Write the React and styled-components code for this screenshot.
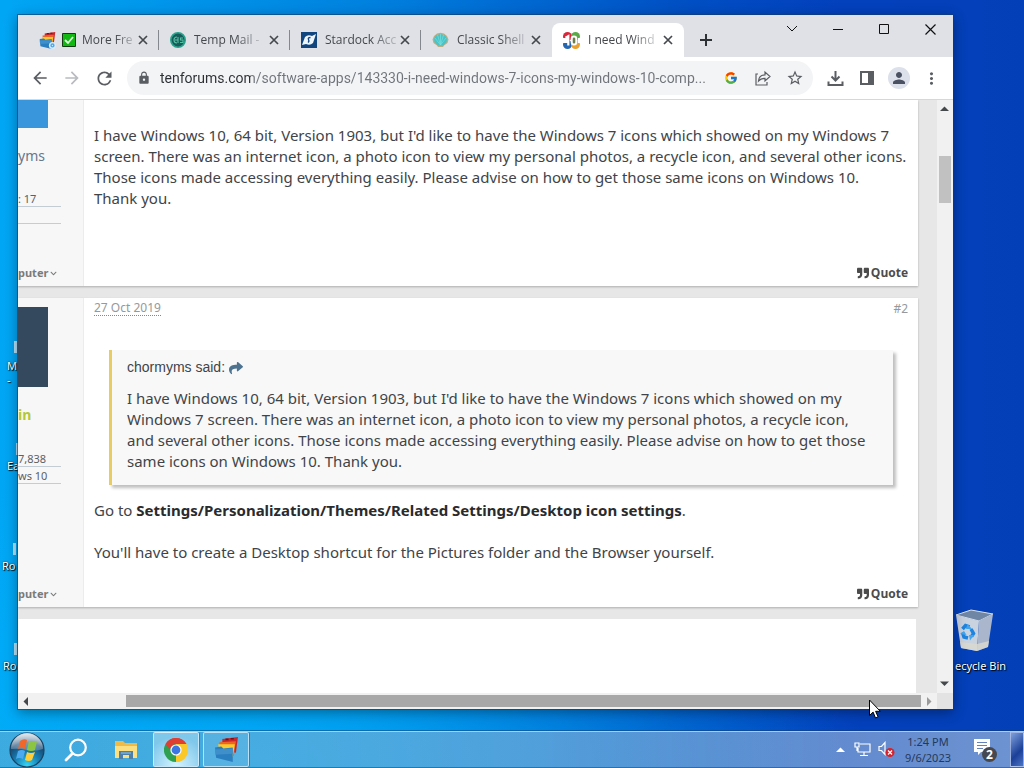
import React from "react";
import styled, { createGlobalStyle } from "styled-components";
import {
  MdArrowBack,
  MdArrowForward,
  MdRefresh,
  MdLock,
  MdStarBorder,
  MdPerson,
  MdMoreVert,
} from "react-icons/md";
import { FcGoogle } from "react-icons/fc";
import { FaQuoteRight, FaShare, FaChevronDown } from "react-icons/fa";

const GlobalStyle = createGlobalStyle`
  * { box-sizing: border-box; }
  body {
    margin: 0;
    font-family: "Noto Sans", "Open Sans", sans-serif;
    overflow: hidden;
  }
  button {
    border: 0;
    padding: 0;
    background: none;
    color: inherit;
    font: inherit;
    display: flex;
    align-items: center;
    justify-content: center;
    flex: none;
  }
  svg { display: block; flex: none; }
  a { color: inherit; text-decoration: none; }
`;

/* ---------- desktop ---------- */

const Desktop = styled.div`
  position: relative;
  display: flex;
  flex-direction: column;
  justify-content: flex-end;
  height: 100vh;
  overflow: hidden;
  background:
    radial-gradient(ellipse 60% 40% at 25% 100%, rgba(0, 178, 250, 0.75), rgba(0, 178, 250, 0) 100%),
    linear-gradient(90deg, #00a6f4 0%, #0083e0 35%, #0050c4 66%, #0340bc 82%, #0340b8 100%);
`;

const DesktopItem = styled.div`
  position: absolute;
  left: ${(p) => p.$x}px;
  top: ${(p) => p.$y}px;
  display: flex;
  flex-direction: column;
  align-items: flex-start;
  gap: ${(p) => p.$gap || 4}px;
  font-size: 11px;
  line-height: 14px;
  color: #fff;
  white-space: pre-line;
  text-shadow: 1px 1px 1px #000, 0 0 2px rgba(0, 0, 0, 0.7);
`;

const Sliver = styled.span`
  width: 3px;
  height: 12px;
  align-self: flex-end;
  background: rgba(225, 240, 250, 0.8);
`;

const Pointer = styled.svg`
  position: absolute;
  left: 868px;
  top: 699px;
`;

/* ---------- browser window ---------- */

const Window = styled.main`
  position: absolute;
  top: 15px;
  right: 71px;
  bottom: 59px;
  left: 18px;
  display: flex;
  flex-direction: column;
  background: #fff;
  box-shadow: 0 0 0 1px rgba(20, 60, 110, 0.6), 0 3px 12px rgba(0, 0, 0, 0.4);
`;

const TabStrip = styled.header`
  display: flex;
  justify-content: space-between;
  height: 42px;
  flex: none;
  padding-left: 10px;
  background: #dfe1e7;
`;

const Tabs = styled.div`
  display: flex;
  align-items: flex-end;
`;

const Tab = styled.div`
  position: relative;
  display: flex;
  align-items: center;
  width: ${(p) => (p.$active ? 132 : 131)}px;
  height: 34px;
  padding: 0 8px 0 11px;
  border-radius: 8px 8px 0 0;
  color: #45484d;
  background: ${(p) => (p.$active ? "#fff" : "transparent")};
  &::after {
    content: "";
    position: absolute;
    right: 0;
    top: 7px;
    width: 1px;
    height: 20px;
    background: ${(p) => (p.$divider ? "#84878d" : "transparent")};
  }
`;

const TabTitle = styled.button`
  flex: 1;
  min-width: 0;
  justify-content: flex-start;
  gap: ${(p) => (p.$tight ? 6 : 8)}px;
  font-family: "Open Sans", "Noto Sans", sans-serif;
  font-size: 12px;
  line-height: 18px;
  white-space: nowrap;
`;

const Fade = styled.span`
  text-align: left;
  mask-image: linear-gradient(90deg, #000 65%, rgba(0, 0, 0, 0.25) 100%);
`;

const TabClose = styled.button`
  width: 16px;
  height: 16px;
`;

const NewTab = styled.button`
  width: 28px;
  height: 34px;
  margin-left: 8px;
  color: #2e3136;
`;

const Captions = styled.div`
  display: flex;
  align-items: flex-start;
`;

const Caption = styled.button`
  width: 46px;
  height: 28px;
  color: #111;
`;

const Toolbar = styled.nav`
  display: flex;
  align-items: center;
  height: 43px;
  flex: none;
  padding-left: 6px;
  padding-right: 6px;
  border-bottom: 1px solid #d5d7da;
  color: #5a5d62;
`;

const ToolButton = styled.button`
  width: 32px;
  height: 32px;
  color: ${(p) => (p.$dim ? "#b9bbbe" : "inherit")};
`;

const Omnibox = styled.div`
  display: flex;
  align-items: center;
  flex: 1;
  min-width: 0;
  height: 34px;
  margin: 0 6px 0 7px;
  padding-left: 10px;
  padding-right: 2px;
  border-radius: 17px;
  background: #f3f4f6;
`;

const Address = styled.input`
  flex: 1;
  min-width: 0;
  margin-left: 9px;
  padding: 0;
  border: 0;
  outline: 0;
  font-family: Roboto, "Open Sans", sans-serif;
  font-size: 14px;
  line-height: 20px;
  color: transparent;
  background: linear-gradient(90deg, #2c2f33 91px, #70747a 91px);
  background-clip: text;
`;

const Avatar = styled.span`
  display: flex;
  align-items: center;
  justify-content: center;
  width: 22px;
  height: 22px;
  border-radius: 50%;
  background: #dce0ea;
  color: #4a5163;
`;

/* ---------- page view with its scroll bars ---------- */

const View = styled.div`
  flex: 1;
  min-height: 0;
  display: grid;
  grid-template-columns: 1fr 16px;
  grid-template-rows: 1fr 16px;
  background: #f1f1f1;
`;

const Page = styled.div`
  min-height: 0;
  overflow: hidden;
  display: flex;
  flex-direction: column;
  gap: 12px;
  padding-right: 19px;
  background: #e7e7e7;
`;

const Bar = styled.div`
  display: flex;
  flex-direction: ${(p) => (p.$vertical ? "column" : "row")};
  align-items: center;
  padding: ${(p) => (p.$vertical ? "6px 1px 6px 0" : "0 5px")};
  background: #f1f1f1;
  color: #45484b;
`;

const Thumb = styled.span`
  background: ${(p) => (p.$vertical ? "#c1c1c1" : "#a8a8a8")};
  width: ${(p) => (p.$vertical ? "12px" : "auto")};
  height: ${(p) => (p.$vertical ? "47px" : "12px")};
  flex: ${(p) => (p.$vertical ? "none" : 1)};
  margin: ${(p) => (p.$vertical ? "44px 0 auto 1px" : "0 5px 0 97px")};
`;

const Corner = styled.div`
  background: #e3e3e3;
`;

/* ---------- forum ---------- */

const Post = styled.article`
  display: flex;
  flex: none;
  background: #fff;
  box-shadow: 0 1px 2px rgba(0, 0, 0, 0.25);
  color: #404448;
`;

const NextPost = styled.article`
  flex: 1;
  margin-right: 2px;
  background: #fff;
`;

const Member = styled.aside`
  display: flex;
  flex-direction: column;
  width: 66px;
  flex: none;
  background: #f7f7f7;
  border-right: 1px solid #ececec;
`;

const Picture = styled.div`
  width: 30px;
  height: ${(p) => p.$height}px;
  margin-top: ${(p) => p.$top}px;
  background: ${(p) => p.$color};
`;

const Name = styled.a`
  margin-top: 18px;
  font-size: 14px;
  line-height: 20px;
  color: ${(p) => (p.$staff ? "#b5c832" : "#66788c")};
  font-weight: ${(p) => (p.$staff ? 700 : 400)};
`;

const Stats = styled.div`
  width: 43px;
  margin-top: ${(p) => p.$top}px;
  font-size: 11px;
  line-height: 18px;
  color: #5c6066;
`;

const Stat = styled.div`
  height: 17px;
  border-bottom: 1px solid #c4ccd4;
`;

const Computer = styled.button`
  justify-content: flex-start;
  gap: 2px;
  margin-top: auto;
  margin-bottom: 4px;
  font-size: 11px;
  line-height: 18px;
  font-weight: 700;
  color: #7b7b7b;
`;

const Content = styled.div`
  display: flex;
  flex-direction: column;
  flex: 1;
  min-width: 0;
  padding: ${(p) => p.$top}px 10px 4px;
`;

const PostHead = styled.div`
  display: flex;
  justify-content: space-between;
  align-items: flex-start;
  font-size: 12px;
  line-height: 16px;
  color: #96999c;
`;

const PostDate = styled.time`
  border-bottom: 1px dotted #85888b;
  line-height: 14px;
`;

const Text = styled.p`
  margin: 0;
  font-size: 15px;
  line-height: 21px;
  b { color: #292b2e; }
`;

const Quoted = styled.blockquote`
  margin: 33px 15px 15px;
  padding: 7px 15px 13px;
  border-left: 3px solid #e8cc62;
  background: #f8f8f8;
  box-shadow: 3px 3px 3px rgba(0, 0, 0, 0.25);
`;

const Said = styled.div`
  display: flex;
  align-items: center;
  gap: 4px;
  margin-bottom: 10px;
  font-family: "Liberation Sans", Arial, sans-serif;
  font-size: 14px;
  line-height: 21px;
  svg { color: #4d7391; }
`;

const QuoteButton = styled.button`
  align-self: flex-end;
  gap: 2px;
  margin-top: ${(p) => p.$top}px;
  font-family: "Open Sans", "Noto Sans", sans-serif;
  font-size: 12px;
  line-height: 18px;
  font-weight: 700;
  color: #4c4c4c;
`;

/* ---------- taskbar ---------- */

const Taskbar = styled.footer`
  display: flex;
  align-items: stretch;
  height: 37px;
  flex: none;
  padding-left: 1px;
  border-top: 1px solid rgba(190, 225, 245, 0.75);
  border-bottom: 1px solid rgba(40, 60, 90, 0.5);
  box-shadow: 0 -1px 0 rgba(20, 60, 110, 0.5);
  background: linear-gradient(90deg, rgba(120, 170, 200, 0.5), rgba(160, 185, 215, 0.52) 60%, rgba(175, 198, 225, 0.62));
`;

const TaskButton = styled.button`
  width: ${(p) => p.$width}px;
  ${(p) =>
    p.$open &&
    `border: 1px solid rgba(230, 245, 255, 0.7);
     border-radius: 2px;
     box-shadow: 1px 0 0 rgba(30, 80, 120, 0.5);`}
  margin-right: ${(p) => (p.$open ? 4 : 0)}px;
  background: ${(p) =>
    p.$active
      ? "radial-gradient(circle at 50% 100%, #d5f3ff, rgba(160, 215, 240, 0.65) 75%)"
      : p.$open
      ? "rgba(150, 205, 230, 0.2)"
      : "none"};
`;

const Tray = styled.div`
  display: flex;
  align-items: center;
  margin-left: auto;
  color: #fff;
`;

const TrayButton = styled.button`
  width: ${(p) => p.$width || 24}px;
`;

const Clock = styled.time`
  width: 60px;
  margin-right: 2px;
  text-align: center;
  font-size: 11px;
  line-height: 16px;
  color: #25395c;
`;

const Peek = styled.button`
  align-self: stretch;
  width: 14px;
  border: 1px solid rgba(210, 225, 250, 0.65);
  background: linear-gradient(135deg, #7e9fdc, #1c3f98 60%, #4b74c4);
`;

/* ---------- drawings ---------- */

const Cross = () => (
  <svg width="10" height="10" viewBox="0 0 10 10" stroke="#45484d" strokeWidth="1.7">
    <path d="M1 1l8 8M9 1l-8 8" />
  </svg>
);

const FolderStack = ({ size = 18, badge }) => (
  <svg width={size} height={size} viewBox="0 0 24 24">
    <path d="M8 2l15-2-2 15-13-2z" fill="#c8262b" />
    <path d="M11 1.500h3v1.500h-3zM16 1h3v1.500h-3z" fill="#701316" />
    <path d="M5 5l16-1-2 14-13-2z" fill="#ee6423" />
    <path d="M4 7h16l-2 12-12-2z" fill="#fbc92e" />
    <path d="M1 10l6-1 2 2 9-1v14L2 20z" fill="#2a7fc0" />
    <path d="M1 12l17-1v5L1.500 17z" fill="#3f8fcb" />
    {badge && <circle cx="19" cy="19" r="5" fill="#d9ecf8" />}
    {badge && <circle cx="19" cy="19" r="2" fill="none" stroke="#55a5de" strokeWidth="2" />}
  </svg>
);

const TempMail = () => (
  <svg width="16" height="16" viewBox="0 0 16 16">
    <circle cx="8" cy="8" r="7.2" fill="#175c5b" stroke="#27a38c" strokeWidth="1.6" />
    <path d="M7 5a3 3 0 100 6M5 8h3M8 5v6M13 6h-2.5v2H13v2.5h-3" fill="none" stroke="#57c1a4" strokeWidth="1.1" />
  </svg>
);

const Stardock = () => (
  <svg width="16" height="16" viewBox="0 0 16 16">
    <path d="M0 0h16v16H0z" fill="#11457f" />
    <path d="M1 13L4 5q3-3 7-1l4-2-3 9q-3 3-7 1z" fill="#eef5fb" />
    <path d="M9.500 5.500Q6.500 5.500 7.500 7.500T7 10.500" fill="none" stroke="#11457f" strokeWidth="1.3" />
  </svg>
);

const Shell = () => (
  <svg width="17" height="16" viewBox="0 0 17 16">
    <path d="M5 13.500L1.500 11 .5 7.500 2 4l3-2.500L8.500.8 12 1.500 15 4l1.500 3.500-1 3.500-3.500 2.500-1 1.500H6z" fill="#b9ae85" />
    <path d="M6 13.500L2.500 10 2 7l2-3.500L8.500 2 13 3.500 15 7l-.5 3-3.500 3.500z" fill="#42c5cb" />
    <path d="M8.500 13L5.500 3M8.500 13V2M8.500 13l3-10M8.500 13L3 6M8.500 13L14 6" stroke="#78dedd" strokeWidth=".7" />
  </svg>
);

const TenForums = () => (
  <svg width="17" height="17" viewBox="0 0 17 17">
    <circle cx="4.500" cy="4.500" r="4.500" fill="#d9273b" />
    <circle cx="12.500" cy="4.500" r="4.500" fill="#59a947" />
    <circle cx="4.500" cy="12.500" r="4.500" fill="#2667b2" />
    <circle cx="12.500" cy="12.500" r="4.500" fill="#e9a22c" />
    <path d="M0 6h5v5H0zM15 6h2v5h-2z" fill="#fff" />
    <path d="M2.500 5.800l2.800-1.600V13.500" fill="none" stroke="#fff" strokeWidth="2.200" />
    <rect x="8.700" y="4.500" width="4.600" height="8" rx="2.300" fill="#6b7d48" stroke="#fff" strokeWidth="2" />
  </svg>
);

const CheckMark = () => (
  <svg width="14" height="14" viewBox="0 0 14 14">
    <path d="M.5.5h13v13H.5z" fill="#12b812" stroke="#143c14" />
    <path d="M3 7l3 3 5-6" fill="none" stroke="#d9ffd5" strokeWidth="1.800" />
  </svg>
);

const StartOrb = () => (
  <svg width="36" height="36" viewBox="0 0 36 36">
    <defs>
      <radialGradient id="orb" cx=".5" cy=".95" r=".9">
        <stop offset="0" stopColor="#35d5f5" />
        <stop offset=".4" stopColor="#1681b5" />
        <stop offset=".75" stopColor="#164873" />
        <stop offset="1" stopColor="#7f99b0" />
      </radialGradient>
      <linearGradient id="gloss" x1="0" y1="0" x2="0" y2="1">
        <stop offset="0" stopColor="#fff" stopOpacity=".75" />
        <stop offset="1" stopColor="#fff" stopOpacity=".2" />
      </linearGradient>
    </defs>
    <circle cx="18" cy="18" r="17" fill="url(#orb)" stroke="#1c4261" strokeWidth="1.2" />
    <path d="M2 17a16 16 0 0132 0q-8 3-16 1T2 17z" fill="url(#gloss)" />
    <path d="M11 9q4-3 7-1l-2 9q-4-2-7 0z" fill="#f0662b" />
    <path d="M20 9q4 2 8 0l-2 9q-4 2-8 0z" fill="#8cc542" />
    <path d="M9 19q4-2 7 0l-2 8q-4-2-7 0z" fill="#4eaaf0" />
    <path d="M18 20q4 2 8 0l-3 8q-3 2-7 0z" fill="#ffcd38" />
  </svg>
);

const SearchGlass = () => (
  <svg width="24" height="24" viewBox="0 0 24 24" fill="none" stroke="#fff" strokeLinecap="round">
    <circle cx="14" cy="9.500" r="7.800" strokeWidth="2.200" />
    <path d="M8.500 15.500L2 22" strokeWidth="2.800" />
  </svg>
);

const Explorer = () => (
  <svg width="24" height="24" viewBox="0 0 24 24">
    <path d="M1 3h8l2 2h12v15H1z" fill="#f0ba46" />
    <path d="M1 8h22v12H1z" fill="#fbdf80" />
    <path d="M5 13h14v8h-4v-4H9v4H5z" fill="#4d7fa9" />
    <path d="M7 14h10v2H7z" fill="#6fa3ca" />
  </svg>
);

const Chrome = () => (
  <svg width="24" height="24" viewBox="0 0 24 24">
    <path d="M12 12L1.600 6A12 12 0 0122.400 6z" fill="#df3e33" />
    <path d="M12 12l10.400-6A12 12 0 0112 24z" fill="#fbc829" />
    <path d="M12 12v12A12 12 0 011.600 6z" fill="#2fa052" />
    <path d="M12 6h10.400A12 12 0 0112 24l5.200-9z" fill="#fbc829" />
    <path d="M1.600 6l5.200 9h5L12 6z" fill="#2fa052" />
    <path d="M1.600 6A12 12 0 0122.400 6H12a6 6 0 00-5.200 3L6 12z" fill="#df3e33" />
    <circle cx="12" cy="12" r="5.600" fill="#fff" />
    <circle cx="12" cy="12" r="4.400" fill="#3b76e4" />
  </svg>
);

const RecycleBin = () => (
  <svg width="40" height="44" viewBox="0 0 40 44">
    <path d="M1 6l15-5 22 4-14 7z" fill="#6f86a5" stroke="#dbe2ec" />
    <path d="M1 6l23 6-2 30-16-3z" fill="#c9d2df" />
    <path d="M24 12l14-7-5 33-11 4z" fill="#a9b6cb" />
    <path d="M5 33l17 2 12-3-1 6-11 4-16-3z" fill="#dcd9cf" opacity=".8" />
    <g fill="none" stroke="#1d84e0" strokeWidth="3.500">
      <path d="M7.500 20l3-3.500 4 1.500M16 20l2.500 4.500-2 3M7.500 23.500l1.500 4.500 4 1" />
    </g>
    <path d="M12.500 15l4.500 5-6 0zM19 26l-4 5.500-1-5.500zM5 25l4-3 2.500 4z" fill="#43a5ee" />
  </svg>
);

const Triangle = ({ dir, color = "currentColor" }) => (
  <svg width={dir === "up" || dir === "down" ? 9 : 6} height={dir === "up" || dir === "down" ? 6 : 9}
    viewBox={dir === "up" || dir === "down" ? "0 0 9 6" : "0 0 6 9"} fill={color}>
    <path d={{ up: "M0 5l4.500-4.500L9 5z", down: "M0 .5h9L4.500 5z", left: "M5 0v9L.5 4.500z", right: "M1 0v9l4.500-4.500z" }[dir]} />
  </svg>
);

const tabs = [
  { title: "More Fre", icon: <FolderStack size={17} badge />, check: true },
  { title: "Temp Mail -", icon: <TempMail /> },
  { title: "Stardock Acc", icon: <Stardock /> },
  { title: "Classic Shell", icon: <Shell /> },
  { title: "I need Wind", icon: <TenForums />, active: true },
];

const BrowserTabs = () => (
  <Tabs>
    {tabs.map((t, i) => (
      <Tab key={t.title} $active={t.active} $divider={i < 3}>
        <TabTitle $tight={t.check}>
          {t.icon}
          {t.check && <CheckMark />}
          <Fade>{t.title}</Fade>
        </TabTitle>
        <TabClose aria-label="Close tab"><Cross /></TabClose>
      </Tab>
    ))}
    <NewTab aria-label="New tab">
      <svg width="12" height="12" viewBox="0 0 12 12" stroke="currentColor" strokeWidth="2">
        <path d="M6 0v12M0 6h12" />
      </svg>
    </NewTab>
  </Tabs>
);

const WindowButtons = () => (
  <Captions>
    <Caption aria-label="Search tabs">
      <svg width="12" height="8" viewBox="0 0 12 8" fill="none" stroke="currentColor"><path d="M1 1l5 5 5-5" /></svg>
    </Caption>
    <Caption aria-label="Minimize">
      <svg width="10" height="2" viewBox="0 0 10 2" fill="currentColor"><path d="M0 1h10v1H0z" /></svg>
    </Caption>
    <Caption aria-label="Maximize">
      <svg width="10" height="10" viewBox="0 0 10 10" fill="none" stroke="currentColor"><path d="M.5.5h9v9h-9z" /></svg>
    </Caption>
    <Caption aria-label="Close">
      <svg width="11" height="11" viewBox="0 0 11 11" stroke="currentColor" strokeWidth="1.2"><path d="M.5.5l10 10M10.500.5l-10 10" /></svg>
    </Caption>
  </Captions>
);

const BrowserToolbar = () => (
  <Toolbar>
    <ToolButton aria-label="Back"><MdArrowBack size={20} /></ToolButton>
    <ToolButton aria-label="Forward" $dim><MdArrowForward size={20} /></ToolButton>
    <ToolButton aria-label="Reload"><MdRefresh size={21} /></ToolButton>
    <Omnibox>
      <MdLock size={14} />
      <Address
        aria-label="Address"
        readOnly
        value="tenforums.com/software-apps/143330-i-need-windows-7-icons-my-windows-10-comp..."
      />
      <ToolButton aria-label="Search with Google"><FcGoogle size={14} /></ToolButton>
      <ToolButton aria-label="Share">
        <svg width="16" height="16" viewBox="0 0 16 16" fill="none" stroke="currentColor" strokeWidth="1.2">
          <path d="M3 4H1v11h11v-3" />
          <path d="M3.500 11Q4 5 10 4.800V2l5 4.500L10 11V8.300Q6 8.300 3.500 11z" />
        </svg>
      </ToolButton>
      <ToolButton aria-label="Bookmark"><MdStarBorder size={18} /></ToolButton>
    </Omnibox>
    <ToolButton aria-label="Downloads">
      <svg width="17" height="17" viewBox="0 0 17 17" fill="none" stroke="currentColor" strokeWidth="2">
        <path d="M8.500 1v9M4.500 6.500l4 4 4-4M1.500 11.500V15h14v-3.500" />
      </svg>
    </ToolButton>
    <ToolButton aria-label="Side panel">
      <svg width="14" height="14" viewBox="0 0 14 14"><path d="M1 1h12v12H1z" fill="none" stroke="currentColor" strokeWidth="2" /><path d="M8 1h5v12H8z" fill="currentColor" /></svg>
    </ToolButton>
    <ToolButton aria-label="Profile"><Avatar><MdPerson size={18} /></Avatar></ToolButton>
    <ToolButton aria-label="Menu"><MdMoreVert size={19} /></ToolButton>
  </Toolbar>
);

const SystemLink = () => <Computer>puter <FaChevronDown size={7} /></Computer>;
const Quote = ({ top }) => (
  <QuoteButton $top={top}><FaQuoteRight size={12} />Quote</QuoteButton>
);

const Forum = () => (
  <Page>
    <Post>
      <Member>
        <Picture $height={28} $top={0} $color="#3a96dc" />
        <Name href="#member">yms</Name>
        <Stats $top={24}>
          <Stat>: 17</Stat>
          <Stat />
        </Stats>
        <SystemLink />
      </Member>
      <Content $top={25}>
        <Text>
          I have Windows 10, 64 bit, Version 1903, but I'd like to have the Windows 7 icons which showed on my Windows 7
          screen. There was an internet icon, a photo icon to view my personal photos, a recycle icon, and several other icons.
          Those icons made accessing everything easily. Please advise on how to get those same icons on Windows 10.
          <br />Thank you.
        </Text>
        <Quote top={55} />
      </Content>
    </Post>
    <Post>
      <Member>
        <Picture $height={80} $top={9} $color="#34495e" />
        <Name href="#member" $staff>in</Name>
        <Stats $top={25}>
          <Stat>7,838</Stat>
          <Stat>ws 10</Stat>
        </Stats>
        <SystemLink />
      </Member>
      <Content $top={3}>
        <PostHead>
          <PostDate>27 Oct 2019</PostDate>
          <a href="#post2">#2</a>
        </PostHead>
        <Quoted>
          <Said>chormyms said: <FaShare size={14} /></Said>
          <Text>
            I have Windows 10, 64 bit, Version 1903, but I'd like to have the Windows 7 icons which showed on my
            Windows 7 screen. There was an internet icon, a photo icon to view my personal photos, a recycle icon,
            and several other icons. Those icons made accessing everything easily. Please advise on how to get those
            same icons on Windows 10. Thank you.
          </Text>
        </Quoted>
        <Text>
          Go to <b>Settings/Personalization/Themes/Related Settings/Desktop icon settings</b>.
          <br /><br />
          You'll have to create a Desktop shortcut for the Pictures folder and the Browser yourself.
        </Text>
        <Quote top={22} />
      </Content>
    </Post>
    <NextPost />
  </Page>
);

export default function App() {
  return (
    <Desktop>
      <GlobalStyle />
      <DesktopItem $x={7} $y={341} $gap={6}><Sliver />{"M\n -"}</DesktopItem>
      <DesktopItem $x={7} $y={443}><Sliver />Ea</DesktopItem>
      <DesktopItem $x={2} $y={543}><Sliver />Ro</DesktopItem>
      <DesktopItem $x={3} $y={643}><Sliver />Ro</DesktopItem>
      <DesktopItem $x={955} $y={609} $gap={6}><RecycleBin />ecycle Bin</DesktopItem>

      <Window>
        <TabStrip>
          <BrowserTabs />
          <WindowButtons />
        </TabStrip>
        <BrowserToolbar />
        <View>
          <Forum />
          <Bar $vertical>
            <Triangle dir="up" />
            <Thumb $vertical />
            <Triangle dir="down" />
          </Bar>
          <Bar>
            <Triangle dir="left" />
            <Thumb />
            <Triangle dir="right" color="#9a9a9a" />
          </Bar>
          <Corner />
        </View>
      </Window>

      <Taskbar>
        <TaskButton $width={52} aria-label="Start"><StartOrb /></TaskButton>
        <TaskButton $width={46} aria-label="Search"><SearchGlass /></TaskButton>
        <TaskButton $width={54} aria-label="File Explorer"><Explorer /></TaskButton>
        <TaskButton $width={46} $open $active aria-label="Chrome"><Chrome /></TaskButton>
        <TaskButton $width={46} $open aria-label="Folders"><FolderStack size={25} /></TaskButton>
        <Tray>
          <TrayButton $width={20} aria-label="Show hidden icons"><Triangle dir="up" /></TrayButton>
          <TrayButton aria-label="Network">
            <svg width="17" height="15" viewBox="0 0 17 15" fill="none" stroke="#fff" strokeWidth="1.2">
              <path d="M6 2h10v8H4V6M1 1h4v4H1zM10 10v3M6 13.500h8M3 5v4" />
            </svg>
          </TrayButton>
          <TrayButton aria-label="Volume">
            <svg width="17" height="17" viewBox="0 0 17 17">
              <path d="M1 5.500h2.500l3.500-4v12l-3.500-4H1z" fill="none" stroke="#fff" strokeWidth="1.2" />
              <circle cx="12" cy="11.500" r="4.500" fill="#d5232d" />
              <path d="M10 9.500l4 4M14 9.500l-4 4" stroke="#fff" strokeWidth="1.3" />
            </svg>
          </TrayButton>
          <Clock>1:24 PM<br />9/6/2023</Clock>
          <TrayButton $width={50} aria-label="Notifications">
            <svg width="24" height="24" viewBox="0 0 24 24">
              <path d="M1 1h16v13h-9l-3 3v-3H1z" fill="#fff" />
              <path d="M4 4.500h10M4 7.500h10M4 10.500h6" stroke="#6483bd" strokeWidth="1.2" />
              <circle cx="16.500" cy="16.500" r="7.500" fill="#45494f" />
              <text x="16.500" y="21" fontSize="12" fontWeight="700" textAnchor="middle" fill="#fff" fontFamily="Noto Sans">2</text>
            </svg>
          </TrayButton>
          <Peek aria-label="Show desktop" />
        </Tray>
      </Taskbar>

      <Pointer width="13" height="20" viewBox="0 0 13 20">
        <path d="M1.500 1v15.500l3.600-3.400L7.500 19l2.600-1.100-2.500-5.600h4.700z" fill="#fff" stroke="#000" />
      </Pointer>
    </Desktop>
  );
}
